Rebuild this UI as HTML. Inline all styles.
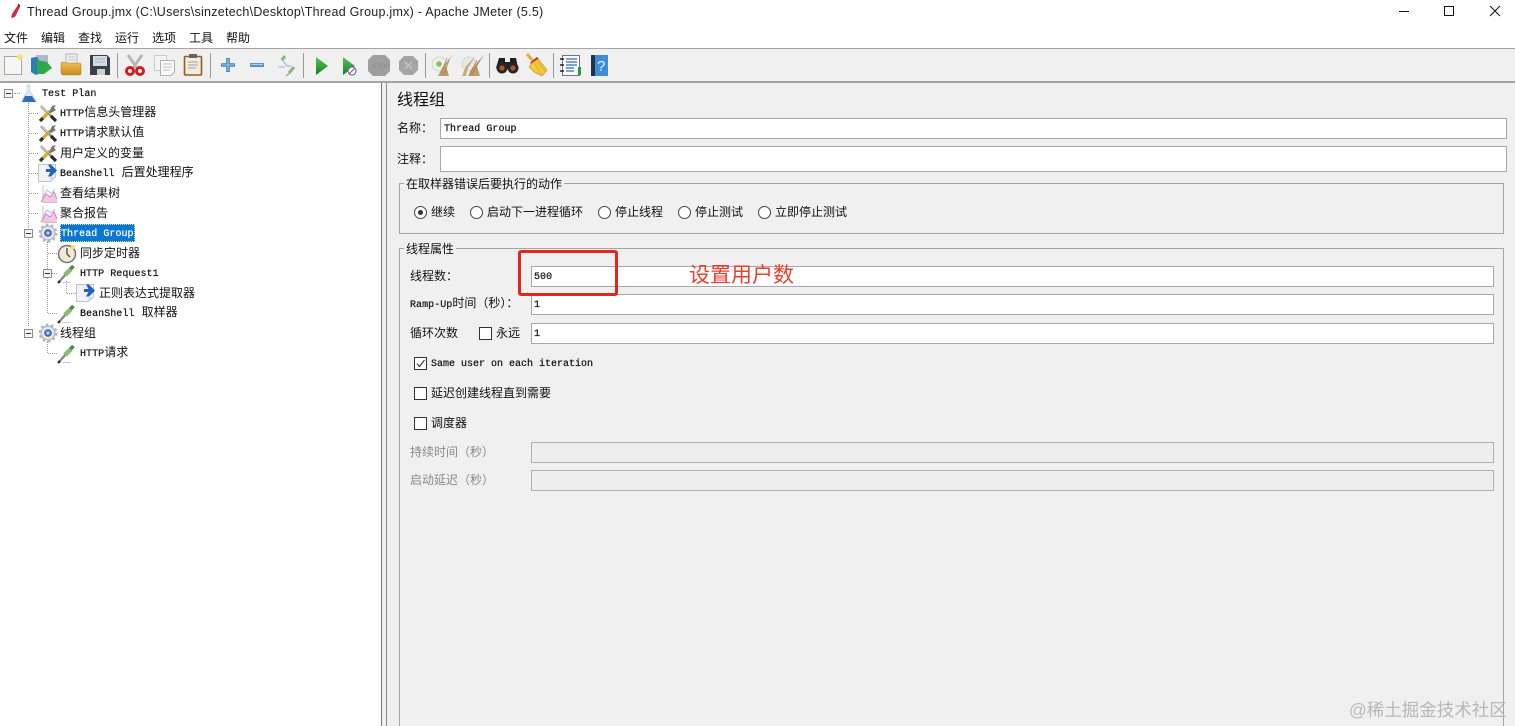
<!DOCTYPE html>
<html><head><meta charset="utf-8"><style>
html,body{margin:0;padding:0;width:1515px;height:726px;overflow:hidden;background:#fff}
body{position:relative;font-family:"Liberation Sans","Noto Sans CJK SC",sans-serif;font-size:12px;color:#111;filter:blur(.3px)}
.a{position:absolute}
.t{position:absolute;white-space:nowrap;line-height:16px;height:16px}
.m{font-family:"Liberation Mono","Noto Sans CJK SC",monospace;}
.m b{font-family:"Liberation Mono",monospace;font-size:10px;font-weight:400;letter-spacing:.05px;-webkit-text-stroke:.25px #222}
.in{position:absolute;background:#fff;border:1px solid #a8a8a8;box-sizing:border-box}
.dis{background:#eeeeee;border-color:#b0b0b0}
.sep{position:absolute;top:53px;width:1px;height:25px;background:#9a9a9a}
.cb{position:absolute;width:13px;height:13px;border:1px solid #333;background:#fff;box-sizing:border-box}
.r{position:absolute;width:13px;height:13px;border:1px solid #444;border-radius:50%;background:#fff;box-sizing:border-box}
.ex{position:absolute;width:9px;height:9px;border:1px solid #8a8f96;background:#f4f4f4;box-sizing:border-box}
.ex:after{content:"";position:absolute;left:1px;top:3px;width:5px;height:1px;background:#333}
.v{position:absolute;width:0;border-left:1px dotted #999}
.h{position:absolute;height:0;border-top:1px dotted #999}
svg{position:absolute;overflow:visible}
.g{color:#8a8a8a}
</style></head><body>
<svg width="0" height="0" style="position:absolute"><defs>
<symbol id="wrench" viewBox="0 0 20 20" overflow="visible"><path d="M3 2 L17 16" stroke="#8c8c8c" stroke-width="2.600"/><path d="M3 1.500 L11 9.500" stroke="#e4e4e4" stroke-width="1"/><path d="M13 12 L18 17" stroke="#2b2b2b" stroke-width="3.200"/><path d="M2 17 L12 7" stroke="#d9ab2c" stroke-width="3.200"/><path d="M2 17 L5 14" stroke="#333" stroke-width="3.200"/><path d="M11 8 L14 2 L18 1 L16 4 L18 6 L13 9Z" fill="#777"/></symbol>
<symbol id="pipette" viewBox="0 0 20 20" overflow="visible"><path d="M2 18 L9 10" stroke="#888" stroke-width="2.400"/><path d="M8 11 L14 5" stroke="#8cbc72" stroke-width="4.600"/><path d="M13.500 5 L16.500 2" stroke="#4f8c45" stroke-width="3.600"/><path d="M1 19 L3 17" stroke="#222" stroke-width="2"/><path d="M5 18.500 L14 18.500" stroke="#ccc" stroke-width="1"/></symbol>
<symbol id="gear" viewBox="0 0 20 20" overflow="visible"><circle cx="10" cy="10" r="7" fill="#e4e6ea" stroke="#a4a8ae" stroke-width="1"/><circle cx="10" cy="10" r="8.400" fill="none" stroke="#b4b8be" stroke-width="2.200" stroke-dasharray="2.600 2.700"/><circle cx="10" cy="10" r="3.800" fill="#3f68b4"/><circle cx="10" cy="10" r="1.800" fill="#b8cdea"/></symbol>
<symbol id="note" viewBox="0 0 20 20" overflow="visible"><path d="M.5 1.500H17.500V14L12.500 18.500H.5Z" fill="#f1f3f6" stroke="#c0c5cb"/><path d="M12.500 14L17.500 14L12.500 18.500Z" fill="#d5d8dc"/><path d="M8 6H12.500L10 1.500H13L19 7.500L13 13.500H10L12.500 9H8Z" fill="#1e63c4"/></symbol>
<symbol id="chart" viewBox="0 0 20 20" overflow="visible"><path d="M5 1.500V18.500H19" fill="none" stroke="#c4c4c4" stroke-width="1"/><path d="M3 18 L8 10 L12 13 L16 8 L19 15 V18Z" fill="#f0c8e6"/><path d="M3 18 L8 10 L12 13 L16 8 L19 15" fill="none" stroke="#d880c0" stroke-width="1"/><path d="M4 14 L9 6 L13 9 L17 5" fill="none" stroke="#b0c6e6" stroke-width="1"/></symbol>
<linearGradient id="pg" x1="0" y1="0" x2="0" y2="1"><stop offset="0" stop-color="#5cc255"/><stop offset="1" stop-color="#12802a"/></linearGradient>
<linearGradient id="fg" x1="0" y1="0" x2="0" y2="1"><stop offset="0" stop-color="#f0c050"/><stop offset="1" stop-color="#c98a20"/></linearGradient>
</defs></svg>

<!-- title bar -->
<svg style="left:9px;top:3px" width="12" height="17" viewBox="0 0 12 17"><path d="M6 14 L2 15 L3 11 L9 2 Q11 1 11 4Z" fill="#cf2b45"/><path d="M9 1 L11 3" stroke="#222" stroke-width="1"/></svg>
<div class="t" style="left:27px;top:4px;font-size:12.500px;letter-spacing:.26px;color:#222" id="title">Thread Group.jmx (C:\Users\sinzetech\Desktop\Thread Group.jmx) - Apache JMeter (5.5)</div>
<div class="a" style="left:1399px;top:11px;width:10px;height:1px;background:#111"></div>
<div class="a" style="left:1444px;top:6px;width:10px;height:10px;border:1px solid #111;box-sizing:border-box"></div>
<svg style="left:1490px;top:6px" width="10" height="10"><path d="M0 0L10 10M10 0L0 10" stroke="#111" stroke-width="1"/></svg>
<div class="t" style="left:4px;top:30px">文件</div>
<div class="t" style="left:41px;top:30px">编辑</div>
<div class="t" style="left:78px;top:30px">查找</div>
<div class="t" style="left:115px;top:30px">运行</div>
<div class="t" style="left:152px;top:30px">选项</div>
<div class="t" style="left:189px;top:30px">工具</div>
<div class="t" style="left:226px;top:30px">帮助</div>

<!-- toolbar -->
<div class="a" style="left:0;top:48px;width:1515px;background:#f0f0f0;border-top:1px solid #a6a6a6;border-bottom:2px solid #a3a3a3;box-sizing:border-box;height:35px"></div>
<div class="sep" style="left:117px"></div><div class="sep" style="left:210px"></div><div class="sep" style="left:303px"></div><div class="sep" style="left:425px"></div><div class="sep" style="left:489px"></div><div class="sep" style="left:553px"></div>

<svg style="left:0;top:48px" width="620" height="34" viewBox="0 48 620 34">
<!-- new -->
<rect x="4.500" y="56.500" width="17" height="18" fill="#f6f6f2" stroke="#a8a8a8"/><circle cx="20" cy="57" r="3" fill="#f3e27a"/>
<!-- templates -->
<path d="M31 58 L44 55 V72 L36 75 L31 72Z" fill="#2a7fb5"/><path d="M36 55 L48 55 V63 L40 62Z" fill="#a8bac4"/><path d="M37 60 L47 62 L52 68 L44 74 L37 74Z" fill="#2fa84c"/>
<!-- open -->
<path d="M66 54 H77 V66 H66Z" fill="#f0f0f0" stroke="#b4b4b4"/><path d="M68 57H75M68 60H75" stroke="#c4c4c4"/><path d="M61 64 Q61 62 63 62 L68 63 H79 Q81 63 81 65 V73 Q81 75 79 75 H64 Q61 75 61 72Z" fill="url(#fg)" stroke="#b8842a" stroke-width=".6"/>
<!-- save -->
<path d="M90 55 H107 L110 58 V75 H90Z" fill="#3c4046"/><rect x="93" y="56" width="14" height="10" fill="#d5dde4"/><path d="M95 59H105M95 62H105" stroke="#9fb0c0"/><rect x="97" y="69" width="8" height="6" fill="#cfcfcf"/>
<!-- cut -->
<path d="M128 55 L137 68 M142 55 L133 68" stroke="#b4b4b4" stroke-width="2.800"/><circle cx="130" cy="71" r="3.500" fill="none" stroke="#cb1e1e" stroke-width="3"/><circle cx="140" cy="71" r="3.500" fill="none" stroke="#cb1e1e" stroke-width="3"/>
<!-- copy -->
<rect x="154.500" y="55.500" width="12" height="15" fill="#f3f3f3" stroke="#cccccc"/><path d="M160.500 60.500 H174.500 V72 L171 75.500 H160.500Z" fill="#fafafa" stroke="#b0b0b0"/><path d="M163 64H172M163 67H172M163 70H170" stroke="#c0c0c0"/>
<!-- paste -->
<rect x="184.500" y="56.500" width="17" height="18.500" rx="1" fill="#f1ece0" stroke="#94601a" stroke-width="1.600"/><rect x="189" y="54" width="8" height="4" fill="#666"/><path d="M188 62H198M188 65H198M188 68H196" stroke="#a0a0a0"/>
<!-- plus minus -->
<path d="M228 58V72M221 65H235" stroke="#3f7fbd" stroke-width="3.500"/><path d="M228 59V71M222 65H234" stroke="#a9d0ef" stroke-width="1"/>
<rect x="250" y="63" width="14" height="4" fill="#5c91c6"/><rect x="251" y="64" width="12" height="1" fill="#a9d0ef"/>
<!-- toggle -->
<path d="M281 58 L287 66 H291" stroke="#9bb8d8" stroke-width="1.200" fill="none"/><path d="M278 67 L285 67" stroke="#9bb8d8"/><path d="M282 60 L285 56" stroke="#8db56e" stroke-width="3"/><path d="M289 73 L294 67" stroke="#8db56e" stroke-width="3"/><path d="M286 76 L290 73" stroke="#aaa" stroke-width="1.500"/>
<!-- play -->
<path d="M316 57 L328 66 L316 75Z" fill="url(#pg)"/>
<!-- play no pause -->
<path d="M343 57 L355 66 L343 75Z" fill="url(#pg)"/><circle cx="352" cy="71" r="4" fill="#fff" stroke="#3f64c0"/><path d="M349 74L355 68" stroke="#d03030"/>
<!-- stop -->
<path d="M373 55 H385 L390 60 V71 L385 76 H373 L368 71 V60Z" fill="#9e9e9e"/>
<text x="372" y="68" font-size="6.500" fill="#8a8a8a" font-family="Liberation Sans">STOP</text>
<!-- shutdown -->
<path d="M404 56 H413 L418 61 V70 L413 75 H404 L399 70 V61Z" fill="#a4a4a4"/><path d="M405 62L412 69M412 62L405 69" stroke="#bcbcbc" stroke-width="2"/>
<!-- clear -->
<circle cx="439" cy="64" r="7" fill="#eeeeea" stroke="#c8c8c8" stroke-dasharray="2 1"/><circle cx="439" cy="64" r="2.800" fill="#85bf5a"/><path d="M452 55 L446 66 L449 76 H438 L442 68 Z" fill="#c09a70"/><path d="M447 58 L441 74M449 60 L444 75" stroke="#a87c50" stroke-width=".7"/>
<!-- clear all -->
<circle cx="469" cy="64" r="7" fill="#e8e8e2" stroke="#c4c4c4" stroke-dasharray="2 1"/><path d="M484 55 L477 66 L480 76 H468 L472 68Z" fill="#c09a70"/><path d="M475 57 L468 68 L466 76 H462 L466 66Z" fill="#c8aa88"/><path d="M480 60 L472 75M477 60L470 75" stroke="#a87c50" stroke-width=".7"/>
<!-- binoculars -->
<path d="M499 58 H505 V62 H510 V58 H516 L518 68 H496Z" fill="#1f1f1f"/><circle cx="502" cy="68" r="5.500" fill="#262626"/><circle cx="513" cy="68" r="5.500" fill="#262626"/><circle cx="502" cy="68" r="2.600" fill="#a45b25"/><circle cx="513" cy="68" r="2.600" fill="#a45b25"/>
<!-- broom -->
<path d="M527 54 L533 61" stroke="#e6b040" stroke-width="3"/><path d="M531 64 L538 58" stroke="#c7272b" stroke-width="3"/><path d="M532 63 L538 59 L547 70 L542 76 L534 72 L529 67Z" fill="#f4c93c" stroke="#c8982a" stroke-width=".7"/><path d="M535 64L541 74M538 62L545 71" stroke="#d8a42c" stroke-width=".7"/>
<!-- list -->
<rect x="562.500" y="55.500" width="17" height="20" fill="#fafafa" stroke="#777"/><path d="M560 59H564M560 65H564M560 71H564" stroke="#222" stroke-width="1.600"/><path d="M566 59H577M566 62H577M566 65H577M566 68H574M566 71H574" stroke="#2a72b8" stroke-width="1.200"/><rect x="578" y="67" width="3" height="8" fill="#2a9a3e"/>
<!-- help -->
<rect x="591" y="55" width="5" height="21" fill="#213445"/><rect x="595" y="55" width="13" height="21" fill="#3f8cd8"/>
<text x="597" y="71" font-size="15" fill="#e8f2fb" font-family="Liberation Sans">?</text>
</svg>

<!-- tree panel -->
<div class="a" style="left:0;top:83px;width:382px;height:643px;background:#fff;border-right:1px solid #777;box-sizing:border-box"></div>
<div class="a" style="left:382px;top:83px;width:4px;height:643px;background:#f0f0f0"></div>
<div class="a" style="left:386px;top:83px;width:1129px;height:643px;background:#f0f0f0;border-left:1px solid #8a8a8a;box-sizing:border-box"></div>

<!-- tree lines -->
<div class="v" style="left:28px;top:100px;height:226px"></div>
<div class="h" style="left:14px;top:93px;width:6px"></div>
<div class="h" style="left:29px;top:113px;width:9px"></div>
<div class="h" style="left:29px;top:133px;width:9px"></div>
<div class="h" style="left:29px;top:153px;width:9px"></div>
<div class="h" style="left:29px;top:173px;width:9px"></div>
<div class="h" style="left:29px;top:193px;width:9px"></div>
<div class="h" style="left:29px;top:213px;width:9px"></div>
<div class="v" style="left:47px;top:241px;height:72px"></div>
<div class="h" style="left:48px;top:253px;width:9px"></div>
<div class="h" style="left:52px;top:273px;width:5px"></div>
<div class="h" style="left:48px;top:313px;width:9px"></div>
<div class="v" style="left:66px;top:281px;height:12px"></div>
<div class="h" style="left:67px;top:293px;width:9px"></div>
<div class="v" style="left:47px;top:341px;height:12px"></div>
<div class="h" style="left:48px;top:353px;width:9px"></div>

<div class="ex" style="left:4px;top:89px"></div>
<div class="ex" style="left:24px;top:229px"></div>
<div class="ex" style="left:43px;top:269px"></div>
<div class="ex" style="left:24px;top:329px"></div>

<!-- flask -->
<svg style="left:21px;top:84px" width="16" height="19" viewBox="0 0 16 19"><path d="M6 1 H9 V7 L15 17 Q15 18 14 18 H2 Q1 18 1 17 L6 7Z" fill="#dfe7f2" stroke="#c4cdd8" stroke-width=".6"/><path d="M4 12 H11 L15 18 H1Z" fill="#2f6fc0"/></svg>
<svg style="left:38px;top:104px" width="20" height="20"><use href="#wrench"/></svg>
<svg style="left:38px;top:124px" width="20" height="20"><use href="#wrench"/></svg>
<svg style="left:38px;top:144px" width="20" height="20"><use href="#wrench"/></svg>
<svg style="left:38px;top:163px" width="20" height="20"><use href="#note"/></svg>
<svg style="left:38px;top:184px" width="20" height="20"><use href="#chart"/></svg>
<svg style="left:38px;top:204px" width="20" height="20"><use href="#chart"/></svg>
<svg style="left:38px;top:223px" width="20" height="20"><use href="#gear"/></svg>
<svg style="left:57px;top:244px" width="20" height="20" viewBox="0 0 20 20"><circle cx="10" cy="10" r="8.500" fill="#eee8d6" stroke="#77736a" stroke-width="1.500"/><path d="M10 4V10L13 13" stroke="#444" stroke-width="1.300" fill="none"/><circle cx="16" cy="3" r="2" fill="#f3e27a"/></svg>
<svg style="left:57px;top:264px" width="20" height="20"><use href="#pipette"/></svg>
<svg style="left:76px;top:283px" width="20" height="20"><use href="#note"/></svg>
<svg style="left:57px;top:304px" width="20" height="20"><use href="#pipette"/></svg>
<svg style="left:38px;top:323px" width="20" height="20"><use href="#gear"/></svg>
<svg style="left:57px;top:344px" width="20" height="20"><use href="#pipette"/></svg>

<div class="a" style="left:60px;top:224px;width:75px;height:18px;background:#0a78d2;outline:1px dotted #e8dc9a;outline-offset:-1px"></div>

<div class="t m" style="left:42px;top:85px"><b>Test Plan</b></div>
<div class="t m" style="left:60px;top:105px"><b>HTTP</b>信息头管理器</div>
<div class="t m" style="left:60px;top:125px"><b>HTTP</b>请求默认值</div>
<div class="t" style="left:60px;top:145px">用户定义的变量</div>
<div class="t m" style="left:60px;top:165px"><b>BeanShell</b> 后置处理程序</div>
<div class="t" style="left:60px;top:185px">查看结果树</div>
<div class="t" style="left:60px;top:205px">聚合报告</div>
<div class="t m" style="left:61px;top:225px;color:#fff"><b style="-webkit-text-stroke:.2px #fff">Thread Group</b></div>
<div class="t" style="left:80px;top:245px">同步定时器</div>
<div class="t m" style="left:80px;top:265px"><b>HTTP Request1</b></div>
<div class="t" style="left:99px;top:285px">正则表达式提取器</div>
<div class="t m" style="left:80px;top:305px"><b>BeanShell</b> 取样器</div>
<div class="t" style="left:60px;top:325px">线程组</div>
<div class="t m" style="left:80px;top:345px"><b>HTTP</b>请求</div>

<!-- right panel -->
<div class="t" style="left:397px;top:91px;font-size:16px;line-height:20px;height:20px">线程组</div>
<div class="t" style="left:397px;top:120px">名称：</div>
<div class="in" style="left:440px;top:118px;width:1067px;height:21px"></div>
<div class="t m" style="left:444px;top:120px"><b>Thread Group</b></div>
<div class="t" style="left:397px;top:151px">注释：</div>
<div class="in" style="left:440px;top:146px;width:1067px;height:26px"></div>

<div class="a" style="left:399px;top:183px;width:1105px;height:51px;border:1px solid #a6a6a6;box-sizing:border-box"></div>
<div class="t" style="left:404px;top:176px;background:#f0f0f0;padding:0 2px">在取样器错误后要执行的动作</div>
<div class="r" style="left:414px;top:206px"></div><div class="a" style="left:418px;top:210px;width:5px;height:5px;border-radius:50%;background:#333"></div>
<div class="t" style="left:431px;top:204px">继续</div>
<div class="r" style="left:470px;top:206px"></div><div class="t" style="left:487px;top:204px">启动下一进程循环</div>
<div class="r" style="left:598px;top:206px"></div><div class="t" style="left:615px;top:204px">停止线程</div>
<div class="r" style="left:678px;top:206px"></div><div class="t" style="left:695px;top:204px">停止测试</div>
<div class="r" style="left:758px;top:206px"></div><div class="t" style="left:775px;top:204px">立即停止测试</div>

<div class="a" style="left:399px;top:248px;width:1105px;height:490px;border:1px solid #a6a6a6;box-sizing:border-box"></div>
<div class="t" style="left:404px;top:241px;background:#f0f0f0;padding:0 2px">线程属性</div>

<div class="t" style="left:410px;top:268px">线程数：</div>
<div class="in" style="left:531px;top:266px;width:963px;height:21px"></div>
<div class="t m" style="left:534px;top:268px"><b>500</b></div>
<div class="t m" style="left:410px;top:296px;white-space:nowrap"><b>Ramp-Up</b>时间（秒）：</div>
<div class="in" style="left:531px;top:294px;width:963px;height:21px"></div>
<div class="t m" style="left:534px;top:296px"><b>1</b></div>
<div class="t" style="left:410px;top:325px">循环次数</div>
<div class="cb" style="left:479px;top:327px"></div>
<div class="t" style="left:496px;top:325px">永远</div>
<div class="in" style="left:531px;top:323px;width:963px;height:21px"></div>
<div class="t m" style="left:534px;top:325px"><b>1</b></div>

<div class="cb" style="left:414px;top:357px"></div>
<svg style="left:414px;top:357px" width="13" height="13"><path d="M3 6.500L5.500 9.500L10.500 3" stroke="#333" stroke-width="1.100" fill="none"/></svg>
<div class="t m" style="left:431px;top:355px"><b style="letter-spacing:0">Same user on each iteration</b></div>
<div class="cb" style="left:414px;top:387px"></div>
<div class="t" style="left:431px;top:385px">延迟创建线程直到需要</div>
<div class="cb" style="left:414px;top:417px"></div>
<div class="t" style="left:431px;top:415px">调度器</div>
<div class="t g" style="left:410px;top:444px">持续时间（秒）</div>
<div class="in dis" style="left:531px;top:442px;width:963px;height:21px"></div>
<div class="t g" style="left:410px;top:472px">启动延迟（秒）</div>
<div class="in dis" style="left:531px;top:470px;width:963px;height:21px"></div>

<!-- annotation -->
<div class="a" style="left:518px;top:250px;width:100px;height:46px;border:3px solid #e3261c;border-radius:3px;box-sizing:border-box"></div>
<div class="t" style="left:689px;top:263px;font-size:21px;line-height:26px;height:26px;color:#e8402f">设置用户数</div>

<!-- watermark -->
<div class="t" style="left:1349px;top:699px;font-size:17.500px;line-height:22px;height:22px;color:#b8b8b8">@稀土掘金技术社区</div>
</body></html>
